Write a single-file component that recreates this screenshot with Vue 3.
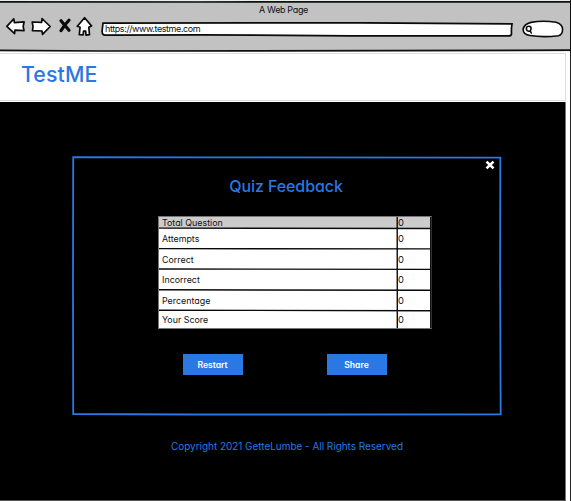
<script setup>
const rows = [
  { label: 'Total Question', value: 0 },
  { label: 'Attempts', value: 0 },
  { label: 'Correct', value: 0 },
  { label: 'Incorrect', value: 0 },
  { label: 'Percentage', value: 0 },
  { label: 'Your Score', value: 0 },
]
</script>

<template>
  <div class="window">
    <header class="chrome">
      <svg class="frame" viewBox="0 0 571 52" fill="none" stroke="#101010">
        <path d="M0 1.8 L200 2 L571 1.8" stroke-width="1.7" />
        <path d="M0 50.4 L100 51 L250 50.9 L571 50.2" stroke-width="1.7" />
      </svg>
      <div class="window-title">A Web Page</div>
      <div class="toolbar">
        <svg class="nav" viewBox="0 0 88 20" fill="#fff" stroke="#0a0a0a" stroke-width="1.7" stroke-linejoin="round" stroke-linecap="round">
          <path d="M1.8 10.3 L8.8 2.8 L9.4 6.7 L19.1 5.9 L18.2 10.5 L19 14.6 L9.9 14.2 L9.6 17.7 Z" />
          <path d="M27.2 6 L36.7 6.3 L37 2.5 L45.2 10.5 L37.5 18.3 L37 15 L27.5 14.7 L28 10.3 Z" />
          <path d="M56 4.7 L64 14.3 M64 4.3 L60.2 8.5 L56 14.6" fill="none" stroke-width="3.2" />
          <path d="M79.6 1.7 L86.5 9.9 L83.8 11.2 L84.5 18.7 L81 19.1 L80.7 15.1 L78.5 15.1 L78.1 19 L74.3 18.6 L75.1 11.2 L72.3 10.3 Z" />
        </svg>
        <div class="address">
          <svg class="outline" viewBox="0 0 412 15" fill="#fff" stroke="#0a0a0a" stroke-width="1.7">
            <path d="M2 1.1 L150 .9 L260 .8 L411 1.9 Q410.2 7 410.5 12 Q410 14.2 407 13.9 L250 13.8 L100 12.8 L4 13.2 Q1 13 1.1 9 Z" />
          </svg>
          <span class="url">https://www.testme.com</span>
        </div>
        <svg class="search" viewBox="0 0 42 18" fill="#fff" stroke="#0a0a0a" stroke-width="1.6" stroke-linecap="round">
          <path d="M9 2.4 Q21 .2 34 2.3 Q40.5 4 40.6 9.6 Q40.3 15 36.5 15.7 Q21 17.6 8 15.5 Q1.2 14.5 1.1 9.5 Q2 4 9 2.4 Z" />
          <path d="M4.4 8.4 Q4.6 6.2 7 6.3 Q9.3 6.5 9 9 Q8.7 11.4 6.6 11.2 Q4.2 11 4.4 8.4 M8.2 10.9 L9.3 13" stroke-width="1.6" />
        </svg>
      </div>
    </header>

    <div class="viewport">
      <div class="page">
        <div class="brand-bar"><h1>TestME</h1></div>
        <main>
          <section class="modal">
            <svg class="outline" viewBox="0 0 430 260" fill="none" stroke="#2a78e4" stroke-width="1.8">
              <path d="M1.2 1.1 L130 1.4 L428.3 1.6 L428.1 120 L428.7 258.4 L250 258.5 L120 258.5 L1.2 258 L1 130 Z" />
            </svg>
            <svg class="close" viewBox="0 0 10 10" stroke="#fff" stroke-width="2.7">
              <path d="M1.5 1.6 L8.5 8.4 M8.5 1.6 L1.5 8.4" />
            </svg>
            <h2>Quiz Feedback</h2>
            <div class="table">
              <div v-for="row in rows" :key="row.label" class="row">
                <div class="label">{{ row.label }}</div>
                <div class="value">{{ row.value }}</div>
              </div>
              <svg class="rules" viewBox="0 0 274 113" fill="none" stroke="#0a0a0a" stroke-width="1.4">
                <path d="M1 12.1 L273 12.5 M1 32.6 L273 32.9 M1 53 L273 53.4 M1 73.8 L273 74.2 M1 94.2 L273 94.8 M239.2 1 L239.3 112" />
              </svg>
            </div>
            <div class="actions">
              <button>Restart</button>
              <button>Share</button>
            </div>
          </section>
          <footer>Copyright 2021 GetteLumbe - All Rights Reserved</footer>
        </main>
      </div>
    </div>
  </div>
</template>

<style>
body { margin: 0; overflow: hidden; }
</style>

<style scoped>
* { box-sizing: border-box; }
.window {
  width: 571px; height: 501px; display: flex; flex-direction: column;
  background: #fff; border-right: 1px solid #222;
  font-family: Inter, "Liberation Sans", sans-serif;
  font-feature-settings: "cv11";
  font-size: 9px; color: #111;
}
.chrome {
  position: relative; height: 52px; flex: none; margin-right: -1px;
  background: linear-gradient(#e9efe9 0 1px, #c2c2c2 1px 51px, #ededed 51px);
  border-right: 1px solid #111;
}
.frame { position: absolute; left: 0; top: 0; width: 571px; height: 52px; }
.window-title { padding-top: 4px; line-height: 12px; text-align: center; padding-right: 3px; letter-spacing: -.35px; }
.toolbar { display: flex; align-items: flex-start; padding-left: 5px; position: relative; }
.nav { width: 88px; height: 20px; flex: none; }
.address { position: relative; width: 412px; height: 15px; margin: 6px 0 0 8px; padding-left: 4px; flex: none; }
.outline { position: absolute; left: 0; top: 0; width: 100%; height: 100%; }
.url { position: relative; display: block; line-height: 13px; font-size: 9px; letter-spacing: -.41px; }
.search { width: 42px; height: 18px; margin: 4px 0 0 9px; flex: none; }
.viewport { flex: 1; padding-right: 4px; min-height: 0; }
.page { width: 566px; height: 449px; display: flex; flex-direction: column; }
.brand-bar {
  height: 48px; margin: 1px 0 1px; flex: none; padding: 8px 21px 0;
  border: 1px solid #dedede; border-left: 0;
}
h1 { margin: 0; font-size: 21.3px; line-height: 25px; font-weight: 450; color: #2a78e4; letter-spacing: .1px; }
main {
  flex: 1; background: #000; border-right: 1px solid #777; border-bottom: 1px solid #555;
  display: flex; flex-direction: column; padding: 54px 0 0 72px;
}
.modal { position: relative; width: 430px; height: 260px; flex: none; }
.close { position: absolute; right: 7px; top: 4px; width: 10px; height: 10px; }
h2 {
  margin: 0; padding: 20px 2px 0 0; font-size: 16px; line-height: 20px; font-weight: 450;
  color: #2a78e4; text-align: center; letter-spacing: -.08px;
}
.table {
  position: relative;
  width: 274px; height: 113px; margin: 20px 0 0 86px; display: grid;
  grid-template-rows: 11px 21px 20px 21px 21px 17px;
  border: 1px solid #777; border-right-color: #333; background: #111; font-size: 8.9px; line-height: 11px;
}
.rules { position: absolute; left: -1px; top: -1px; width: 274px; height: 113px; }
.row { display: grid; grid-template-columns: 239px 32px; }
.row > div { background: #fff; display: flex; align-items: center; }
.row:first-child > div { background: #ccc; }
.row:last-child > div { padding-top: 5px; }
.label { padding-left: 3px; }
.row .value { padding-left: 0; font-size: 9.4px; }
.actions { display: flex; gap: 84px; margin: 25px 0 0 110.5px; }
button {
  width: 60px; height: 21px; padding: 2px 0 0; border: 0; background: #2a78e4; color: #fff;
  font: 600 8.6px/19px Inter, sans-serif; font-feature-settings: "cv11";
}
footer { margin-top: 23px; padding-left: 99px; line-height: 14px; font-size: 9.93px; color: #2a78e4; white-space: nowrap; }
</style>
